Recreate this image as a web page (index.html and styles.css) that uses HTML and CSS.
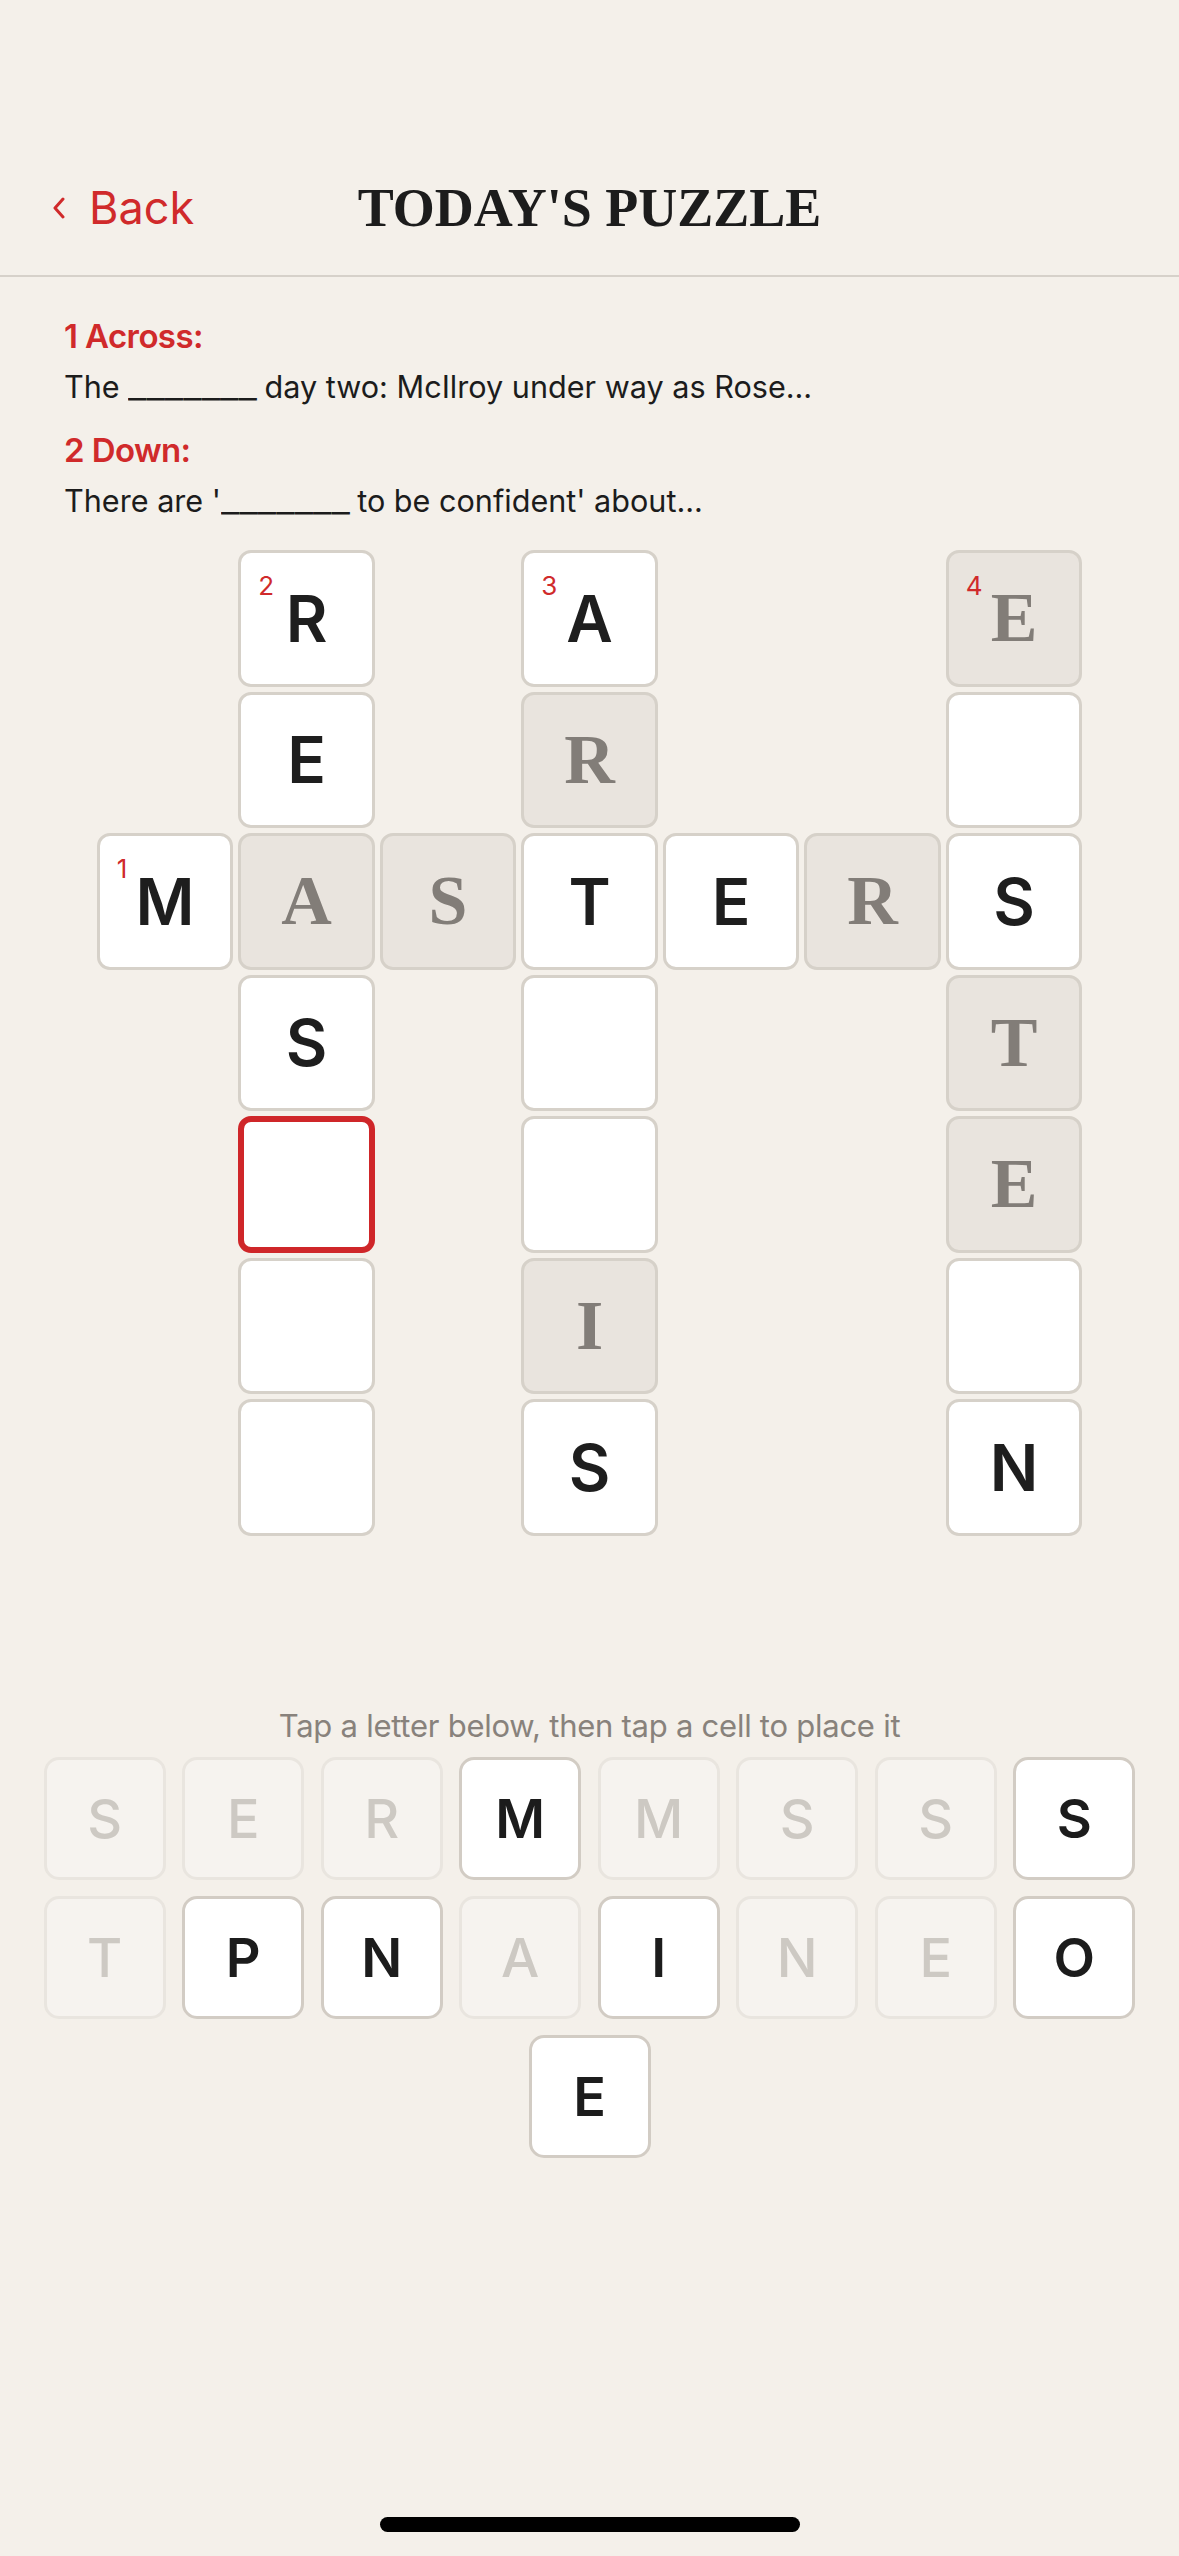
FILE: index.html
```html
<!DOCTYPE html>
<html>
<head>
    <title>Today's Puzzle</title>
    <link rel="stylesheet" href="styles.css">
</head>
<body>
    <div class="status"></div>
    <header class="nav">
        <a class="back" href="#">
            <svg class="chevron" width="12" height="22" viewBox="0 0 12 22"><polyline points="10,2 2,11 10,20" fill="none" stroke="currentColor" stroke-width="3" stroke-linecap="round" stroke-linejoin="round"/></svg>
            <span>Back</span>
        </a>
        <h1 class="title">TODAY'S PUZZLE</h1>
        <div></div>
    </header>

    <section class="clues">
        <div class="clue-label">1 Across:</div>
        <div class="clue-text">The <span class="blank">_______</span> day two: McIlroy under way as Rose...</div>
        <div class="clue-label">2 Down:</div>
        <div class="clue-text">There are '<span class="blank">_______</span> to be confident' about...</div>
    </section>

    <div class="board">
        <!-- row 1 -->
        <div class="void"></div>
        <div class="cell"><span class="num">2</span>R</div>
        <div class="void"></div>
        <div class="cell"><span class="num">3</span>A</div>
        <div class="void"></div>
        <div class="void"></div>
        <div class="cell hint"><span class="num">4</span>E</div>
        <!-- row 2 -->
        <div class="void"></div>
        <div class="cell">E</div>
        <div class="void"></div>
        <div class="cell hint">R</div>
        <div class="void"></div>
        <div class="void"></div>
        <div class="cell"></div>
        <!-- row 3 -->
        <div class="cell"><span class="num">1</span>M</div>
        <div class="cell hint">A</div>
        <div class="cell hint">S</div>
        <div class="cell">T</div>
        <div class="cell">E</div>
        <div class="cell hint">R</div>
        <div class="cell">S</div>
        <!-- row 4 -->
        <div class="void"></div>
        <div class="cell">S</div>
        <div class="void"></div>
        <div class="cell"></div>
        <div class="void"></div>
        <div class="void"></div>
        <div class="cell hint">T</div>
        <!-- row 5 -->
        <div class="void"></div>
        <div class="cell selected"></div>
        <div class="void"></div>
        <div class="cell"></div>
        <div class="void"></div>
        <div class="void"></div>
        <div class="cell hint">E</div>
        <!-- row 6 -->
        <div class="void"></div>
        <div class="cell"></div>
        <div class="void"></div>
        <div class="cell hint">I</div>
        <div class="void"></div>
        <div class="void"></div>
        <div class="cell"></div>
        <!-- row 7 -->
        <div class="void"></div>
        <div class="cell"></div>
        <div class="void"></div>
        <div class="cell">S</div>
        <div class="void"></div>
        <div class="void"></div>
        <div class="cell">N</div>
    </div>

    <p class="hint-text">Tap a letter below, then tap a cell to place it</p>

    <div class="tiles">
        <button class="tile used">S</button>
        <button class="tile used">E</button>
        <button class="tile used">R</button>
        <button class="tile">M</button>
        <button class="tile used">M</button>
        <button class="tile used">S</button>
        <button class="tile used">S</button>
        <button class="tile">S</button>
        <button class="tile used">T</button>
        <button class="tile">P</button>
        <button class="tile">N</button>
        <button class="tile used">A</button>
        <button class="tile">I</button>
        <button class="tile used">N</button>
        <button class="tile used">E</button>
        <button class="tile">O</button>
        <button class="tile">E</button>
    </div>

    <div class="home-bar"></div>
</body>
</html>
```
FILE: styles.css
```css
body {
    margin: 0;
    background-color: #f4f0ea;
    font-family: Inter, "Noto Sans", sans-serif;
    color: #1c1c1c;
}
.status {
    height: 140px;
}
.nav {
    height: 135px;
    border-bottom: 2px solid #d6d1ca;
    display: grid;
    grid-template-columns: 1fr auto 1fr;
    align-items: center;
}
.back {
    display: flex;
    align-items: center;
    gap: 24px;
    padding-left: 53px;
    color: #d02a2b;
    font-size: 45px;
    line-height: 1;
    text-decoration: none;
}
.title {
    margin: 0;
    font-family: "Liberation Serif", serif;
    font-weight: 700;
    font-size: 54px;
    line-height: 1;
    color: #1c1c1c;
}
.clues {
    padding: 39px 64px 0;
}
.clue-label {
    font-size: 33px;
    line-height: 40px;
    font-weight: 600;
    letter-spacing: -0.6px;
    color: #d02a2b;
    margin-bottom: 12px;
}
.clue-text {
    font-size: 30.6px;
    line-height: 38px;
    margin-bottom: 24px;
}
.clue-text:last-child {
    margin-bottom: 0;
}
.blank {
    display: inline-block;
    transform: scaleX(1.32);
    transform-origin: left center;
    margin-right: 30px;
}
.board {
    margin-top: 30px;
    display: grid;
    grid-template-columns: repeat(7, 136.5px);
    grid-auto-rows: 136.5px;
    gap: 5px;
    justify-content: center;
}
.cell {
    position: relative;
    box-sizing: border-box;
    background-color: #fff;
    border: 3px solid #d6d1c9;
    border-radius: 13px;
    display: flex;
    align-items: center;
    justify-content: center;
    font-size: 64px;
    font-weight: 600;
    color: #1e1e1e;
}
.cell.hint {
    background-color: #e9e4de;
    font-family: "Liberation Serif", serif;
    font-weight: 700;
    font-size: 70px;
    color: #827d78;
}
.cell.selected {
    border: 6px solid #cf2629;
}
.num {
    position: absolute;
    top: 20px;
    left: 17px;
    font-family: Inter, sans-serif;
    font-size: 26px;
    font-weight: 400;
    line-height: 1;
    color: #d02a2b;
}
.hint-text {
    margin: 170px 0 0;
    text-align: center;
    font-size: 31px;
    line-height: 40px;
    letter-spacing: -0.25px;
    color: #88827c;
}
.tiles {
    width: 1092px;
    margin: 11px auto 0;
    display: flex;
    flex-wrap: wrap;
    justify-content: center;
    gap: 16px 16.5px;
}
.tile {
    width: 122px;
    height: 123px;
    box-sizing: border-box;
    padding: 0;
    background-color: #fff;
    border: 3px solid #d2ccc4;
    border-radius: 15px;
    font-family: Inter, sans-serif;
    font-size: 54px;
    font-weight: 600;
    color: #1c1c1c;
}
.tile.used {
    background-color: #f6f3ef;
    border-color: #e9e5df;
    color: #cdc9c3;
    font-weight: 500;
}
.home-bar {
    width: 420px;
    height: 15px;
    margin: 359px auto 0;
    border-radius: 8px;
    background-color: #000;
}
```
